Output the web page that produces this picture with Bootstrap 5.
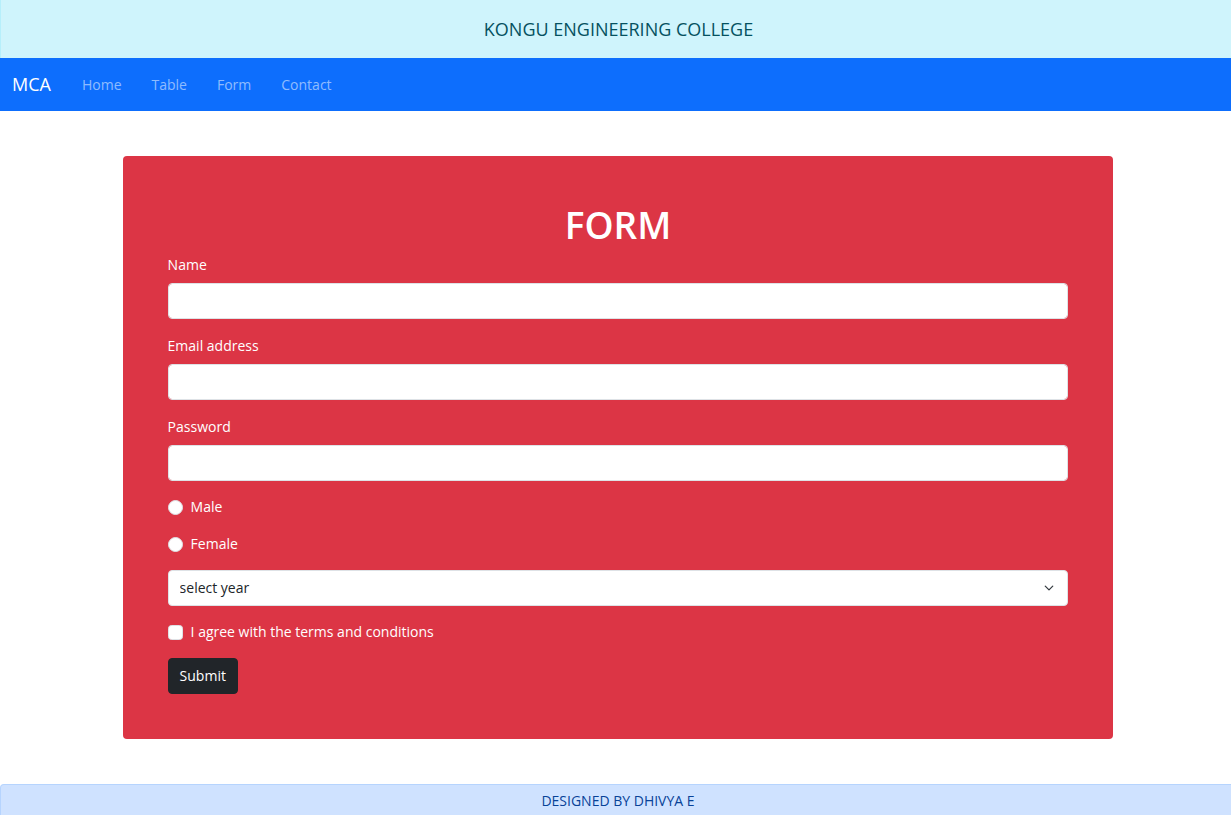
<!DOCTYPE html>
<html lang="en">
<head>
<meta charset="utf-8">
<meta name="viewport" content="width=device-width, initial-scale=1">
<title>MCA - Form</title>
<link href="https://cdn.jsdelivr.net/npm/bootstrap@5.3.0/dist/css/bootstrap.min.css" rel="stylesheet">
<style>
  body { font-family: "Open Sans", "Noto Sans", sans-serif; font-size: 14px; line-height: 22px; overflow-x: hidden; }
  .page-wrap { margin-right: -5px; }
  .college-banner { padding: 18px 0; border-left: 1px solid #b6effb; background: #cff4fc; color: #055160; font-size: 18px; }
  .site-nav { padding: 8px 0; }
  .site-nav .navbar-brand { font-size: 18px; line-height: 27px; padding: 5px 0; margin: 0 16px 0 12px; }
  .site-nav .navbar-nav .nav-link { padding: 7px 15px; color: rgba(255, 255, 255, .55); }
  .form-panel { width: calc(80% + 2px); margin: 45px auto; padding: 45px; border-radius: 4px; background: #dc3545; }
  .form-panel h1 { font-size: 37px; line-height: 48px; margin-bottom: 5px; font-weight: 600; }
  .field-group { margin-bottom: 15px; }
  .field-group .form-label { display: block; margin-bottom: 7px; }
  .form-panel .form-control, .form-panel .form-select, .form-panel .btn { font-size: 14px; line-height: 22px; padding: 6px 11px; border-radius: 4px; }
  .form-panel .form-control { margin-bottom: 0; }
  .form-panel .form-select { padding-right: 34px; background-size: 12px 10px; background-position: right 12px center; }
  .form-panel .form-check { min-height: 22px; padding-left: 23px; }
  .form-panel .form-check-input { width: 15px; height: 15px; margin: 4px 0 0 -23px; }
  .form-panel .form-check-label { display: block; }
  .text-field { margin-bottom: 16px; }
  .text-field + .form-check { margin-top: -1px; }
  .site-footer { padding: 5px 0 3px; border: 1px solid #b6d4fe; border-bottom: 0; border-radius: 4px 4px 0 0; background: #cfe2ff; color: #084298; }
</style>
</head>
<body>
<div class="page-wrap">
  <header class="college-banner text-center">KONGU ENGINEERING COLLEGE</header>
  <nav class="navbar navbar-expand navbar-dark bg-primary site-nav">
    <a class="navbar-brand" href="#">MCA</a>
    <ul class="navbar-nav">
      <li class="nav-item"><a class="nav-link" href="#">Home</a></li>
      <li class="nav-item"><a class="nav-link" href="#">Table</a></li>
      <li class="nav-item"><a class="nav-link" href="#">Form</a></li>
      <li class="nav-item"><a class="nav-link" href="#">Contact</a></li>
    </ul>
  </nav>
  <main class="form-panel text-white">
    <h1 class="text-center">FORM</h1>
    <form>
      <div class="field-group text-field">
        <label class="form-label" for="name">Name</label>
        <input type="text" class="form-control" id="name">
      </div>
      <div class="field-group text-field">
        <label class="form-label" for="email">Email address</label>
        <input type="email" class="form-control" id="email">
      </div>
      <div class="field-group text-field">
        <label class="form-label" for="password">Password</label>
        <input type="password" class="form-control" id="password">
      </div>
      <div class="field-group form-check">
        <input type="radio" class="form-check-input" name="gender" id="male">
        <label class="form-check-label" for="male">Male</label>
      </div>
      <div class="field-group form-check">
        <input type="radio" class="form-check-input" name="gender" id="female">
        <label class="form-check-label" for="female">Female</label>
      </div>
      <div class="field-group">
        <select class="form-select" aria-label="Year">
          <option selected>select year</option>
          <option>1</option>
          <option>2</option>
        </select>
      </div>
      <div class="field-group form-check">
        <input type="checkbox" class="form-check-input" id="terms">
        <label class="form-check-label" for="terms">I agree with the terms and conditions</label>
      </div>
      <button type="submit" class="btn btn-dark">Submit</button>
    </form>
  </main>
  <footer class="site-footer text-center">DESIGNED BY DHIVYA E</footer>
</div>
<script src="https://cdn.jsdelivr.net/npm/bootstrap@5.3.0/dist/js/bootstrap.bundle.min.js"></script>
</body>
</html>
